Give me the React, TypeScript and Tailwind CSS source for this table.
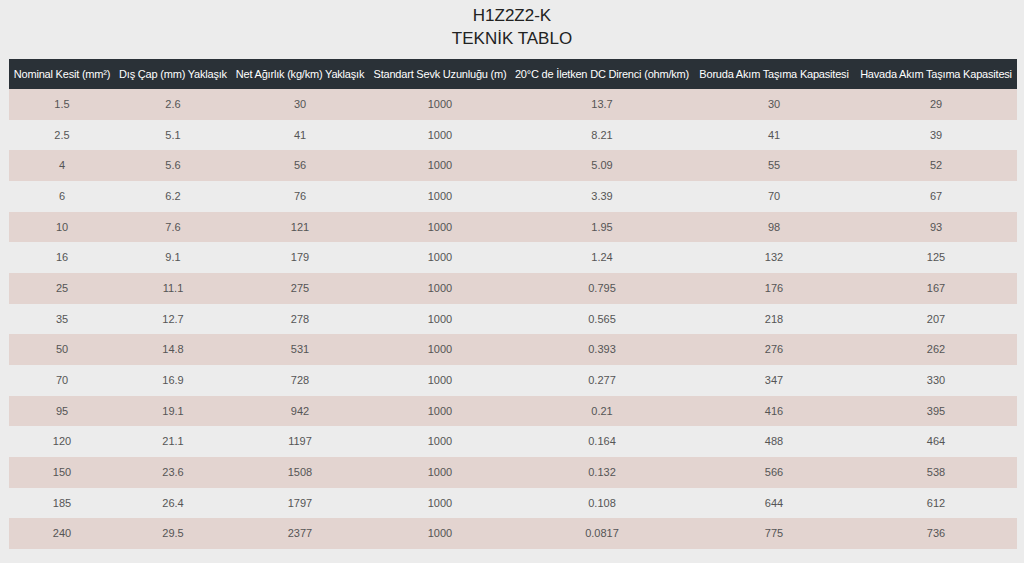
import React from "react";

const headers = [
  "Nominal Kesit (mm²)",
  "Dış Çap (mm) Yaklaşık",
  "Net Ağırlık (kg/km) Yaklaşık",
  "Standart Sevk Uzunluğu (m)",
  "20°C de İletken DC Direnci (ohm/km)",
  "Boruda Akım Taşıma Kapasitesi",
  "Havada Akım Taşıma Kapasitesi",
];

const widths = [106, 116, 138, 142, 182, 162, 162];

const rows = [
  ["1.5", "2.6", "30", "1000", "13.7", "30", "29"],
  ["2.5", "5.1", "41", "1000", "8.21", "41", "39"],
  ["4", "5.6", "56", "1000", "5.09", "55", "52"],
  ["6", "6.2", "76", "1000", "3.39", "70", "67"],
  ["10", "7.6", "121", "1000", "1.95", "98", "93"],
  ["16", "9.1", "179", "1000", "1.24", "132", "125"],
  ["25", "11.1", "275", "1000", "0.795", "176", "167"],
  ["35", "12.7", "278", "1000", "0.565", "218", "207"],
  ["50", "14.8", "531", "1000", "0.393", "276", "262"],
  ["70", "16.9", "728", "1000", "0.277", "347", "330"],
  ["95", "19.1", "942", "1000", "0.21", "416", "395"],
  ["120", "21.1", "1197", "1000", "0.164", "488", "464"],
  ["150", "23.6", "1508", "1000", "0.132", "566", "538"],
  ["185", "26.4", "1797", "1000", "0.108", "644", "612"],
  ["240", "29.5", "2377", "1000", "0.0817", "775", "736"],
];

export default function App() {
  return (
    <div
      className="w-[1024px] h-[563px] bg-[#ececec] overflow-hidden"
      style={{ fontFamily: '"Liberation Sans", Arial, sans-serif' }}
    >
      <div className="pt-[4px] text-center text-[#222] text-[17px] leading-[23px]">
        <div>H1Z2Z2-K</div>
        <div>TEKNİK TABLO</div>
      </div>
      <div className="pl-[9px] pt-[9px]">
        <table className="border-collapse table-fixed w-[1008px]">
          <colgroup>
            {widths.map((w, i) => (
              <col key={i} style={{ width: w }} />
            ))}
          </colgroup>
          <thead>
            <tr className="bg-[#2a3137] h-[30px]">
              {headers.map((h, i) => (
                <th
                  key={i}
                  className="p-0 text-white font-normal text-[11px] tracking-[-0.2px] text-center whitespace-nowrap"
                >
                  {h}
                </th>
              ))}
            </tr>
          </thead>
          <tbody>
            {rows.map((r, ri) => (
              <tr
                key={ri}
                className={`${ri % 2 === 0 ? "bg-[#e3d4d0]" : "bg-[#ececec]"} ${ri % 3 === 1 ? "h-[30px]" : "h-[31px]"}`}
              >
                {r.map((c, ci) => (
                  <td key={ci} className="p-0 text-center text-[#555] text-[11px]">
                    {c}
                  </td>
                ))}
              </tr>
            ))}
          </tbody>
        </table>
      </div>
    </div>
  );
}
